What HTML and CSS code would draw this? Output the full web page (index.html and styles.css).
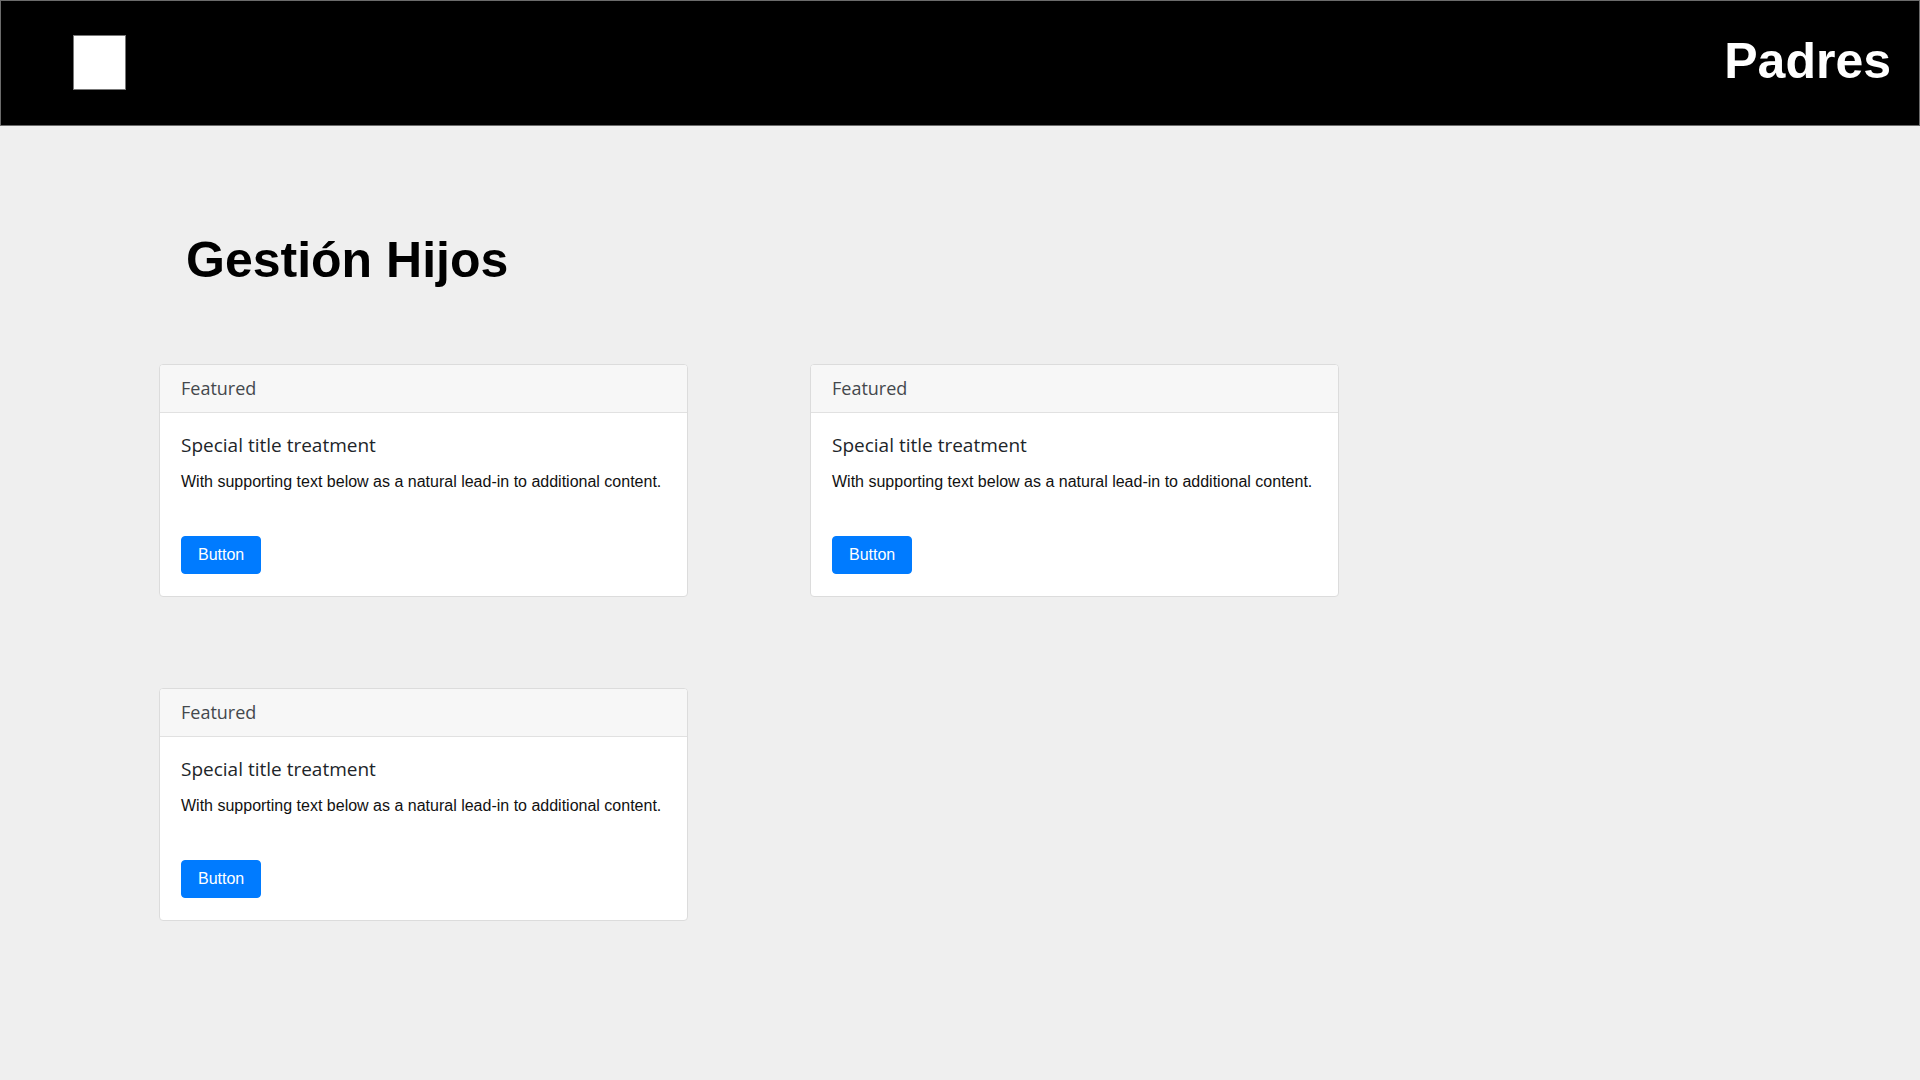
FILE: index.html
```html
<!DOCTYPE html>
<html lang="es">
<head>
<meta charset="utf-8">
<title>Gestión Hijos</title>
<link rel="stylesheet" href="styles.css">
</head>
<body>
<header class="topbar">
  <div class="logo"></div>
  <div class="brand">Padres</div>
</header>
<main class="content">
  <h1 class="page-title">Gestión Hijos</h1>
  <div class="cards">
    <div class="card">
      <div class="card-header">Featured</div>
      <div class="card-body">
        <h5 class="card-title">Special title treatment</h5>
        <p class="card-text">With supporting text below as a natural lead-in to additional content.</p>
        <a class="btn">Button</a>
      </div>
    </div>
    <div class="card">
      <div class="card-header">Featured</div>
      <div class="card-body">
        <h5 class="card-title">Special title treatment</h5>
        <p class="card-text">With supporting text below as a natural lead-in to additional content.</p>
        <a class="btn">Button</a>
      </div>
    </div>
    <div class="card">
      <div class="card-header">Featured</div>
      <div class="card-body">
        <h5 class="card-title">Special title treatment</h5>
        <p class="card-text">With supporting text below as a natural lead-in to additional content.</p>
        <a class="btn">Button</a>
      </div>
    </div>
  </div>
</main>
</body>
</html>
```
FILE: styles.css
```css
* { box-sizing: border-box; }
html, body { margin: 0; padding: 0; }
body {
  background: #efefef;
  font-family: "Liberation Sans", Arial, sans-serif;
  color: #212529;
  min-height: 1080px;
}
.topbar {
  height: 126px;
  background: #000;
  border: 1px solid #6b6b6b;
  display: flex;
  align-items: center;
  justify-content: space-between;
  padding: 0 28px 0 72px;
}
.logo {
  width: 53px;
  height: 55px;
  background: #fff;
  border: 1px solid #777;
  margin-top: -1px;
}
.brand {
  color: #fff;
  font-weight: bold;
  font-size: 50px;
  line-height: 1;
  margin-top: -4px;
}
.content {
  padding: 0 0 0 159px;
}
.page-title {
  margin: 106px 0 0 27px;
  font-size: 50px;
  font-weight: bold;
  line-height: 56px;
  color: #000;
}
.cards {
  margin-top: 76px;
  display: grid;
  grid-template-columns: 529px 529px;
  column-gap: 122px;
  row-gap: 91px;
}
.card {
  background: #fff;
  border: 1px solid #dcdcdc;
  border-radius: 4px;
  overflow: hidden;
}
.card-header {
  background: #f7f7f7;
  border-bottom: 1px solid #e1e1e1;
  padding: 12px 21px;
  font-family: "Open Sans", "Noto Sans", sans-serif;
  font-size: 18px;
  line-height: 23px;
  color: #44484d;
}
.card-body {
  padding: 20px 21px 22px;
}
.card-title {
  margin: 0 0 13px;
  font-family: "Open Sans", "Noto Sans", sans-serif;
  font-weight: normal;
  font-size: 19px;
  line-height: 24px;
  color: #212529;
}
.card-text {
  margin: 0 0 42px;
  font-size: 16px;
  line-height: 24px;
  color: #111;
}
.btn {
  display: inline-block;
  background: #007bff;
  color: #fff;
  border: 1px solid #007bff;
  border-radius: 4px;
  padding: 6px 16px;
  font-size: 16px;
  line-height: 24px;
}
```
